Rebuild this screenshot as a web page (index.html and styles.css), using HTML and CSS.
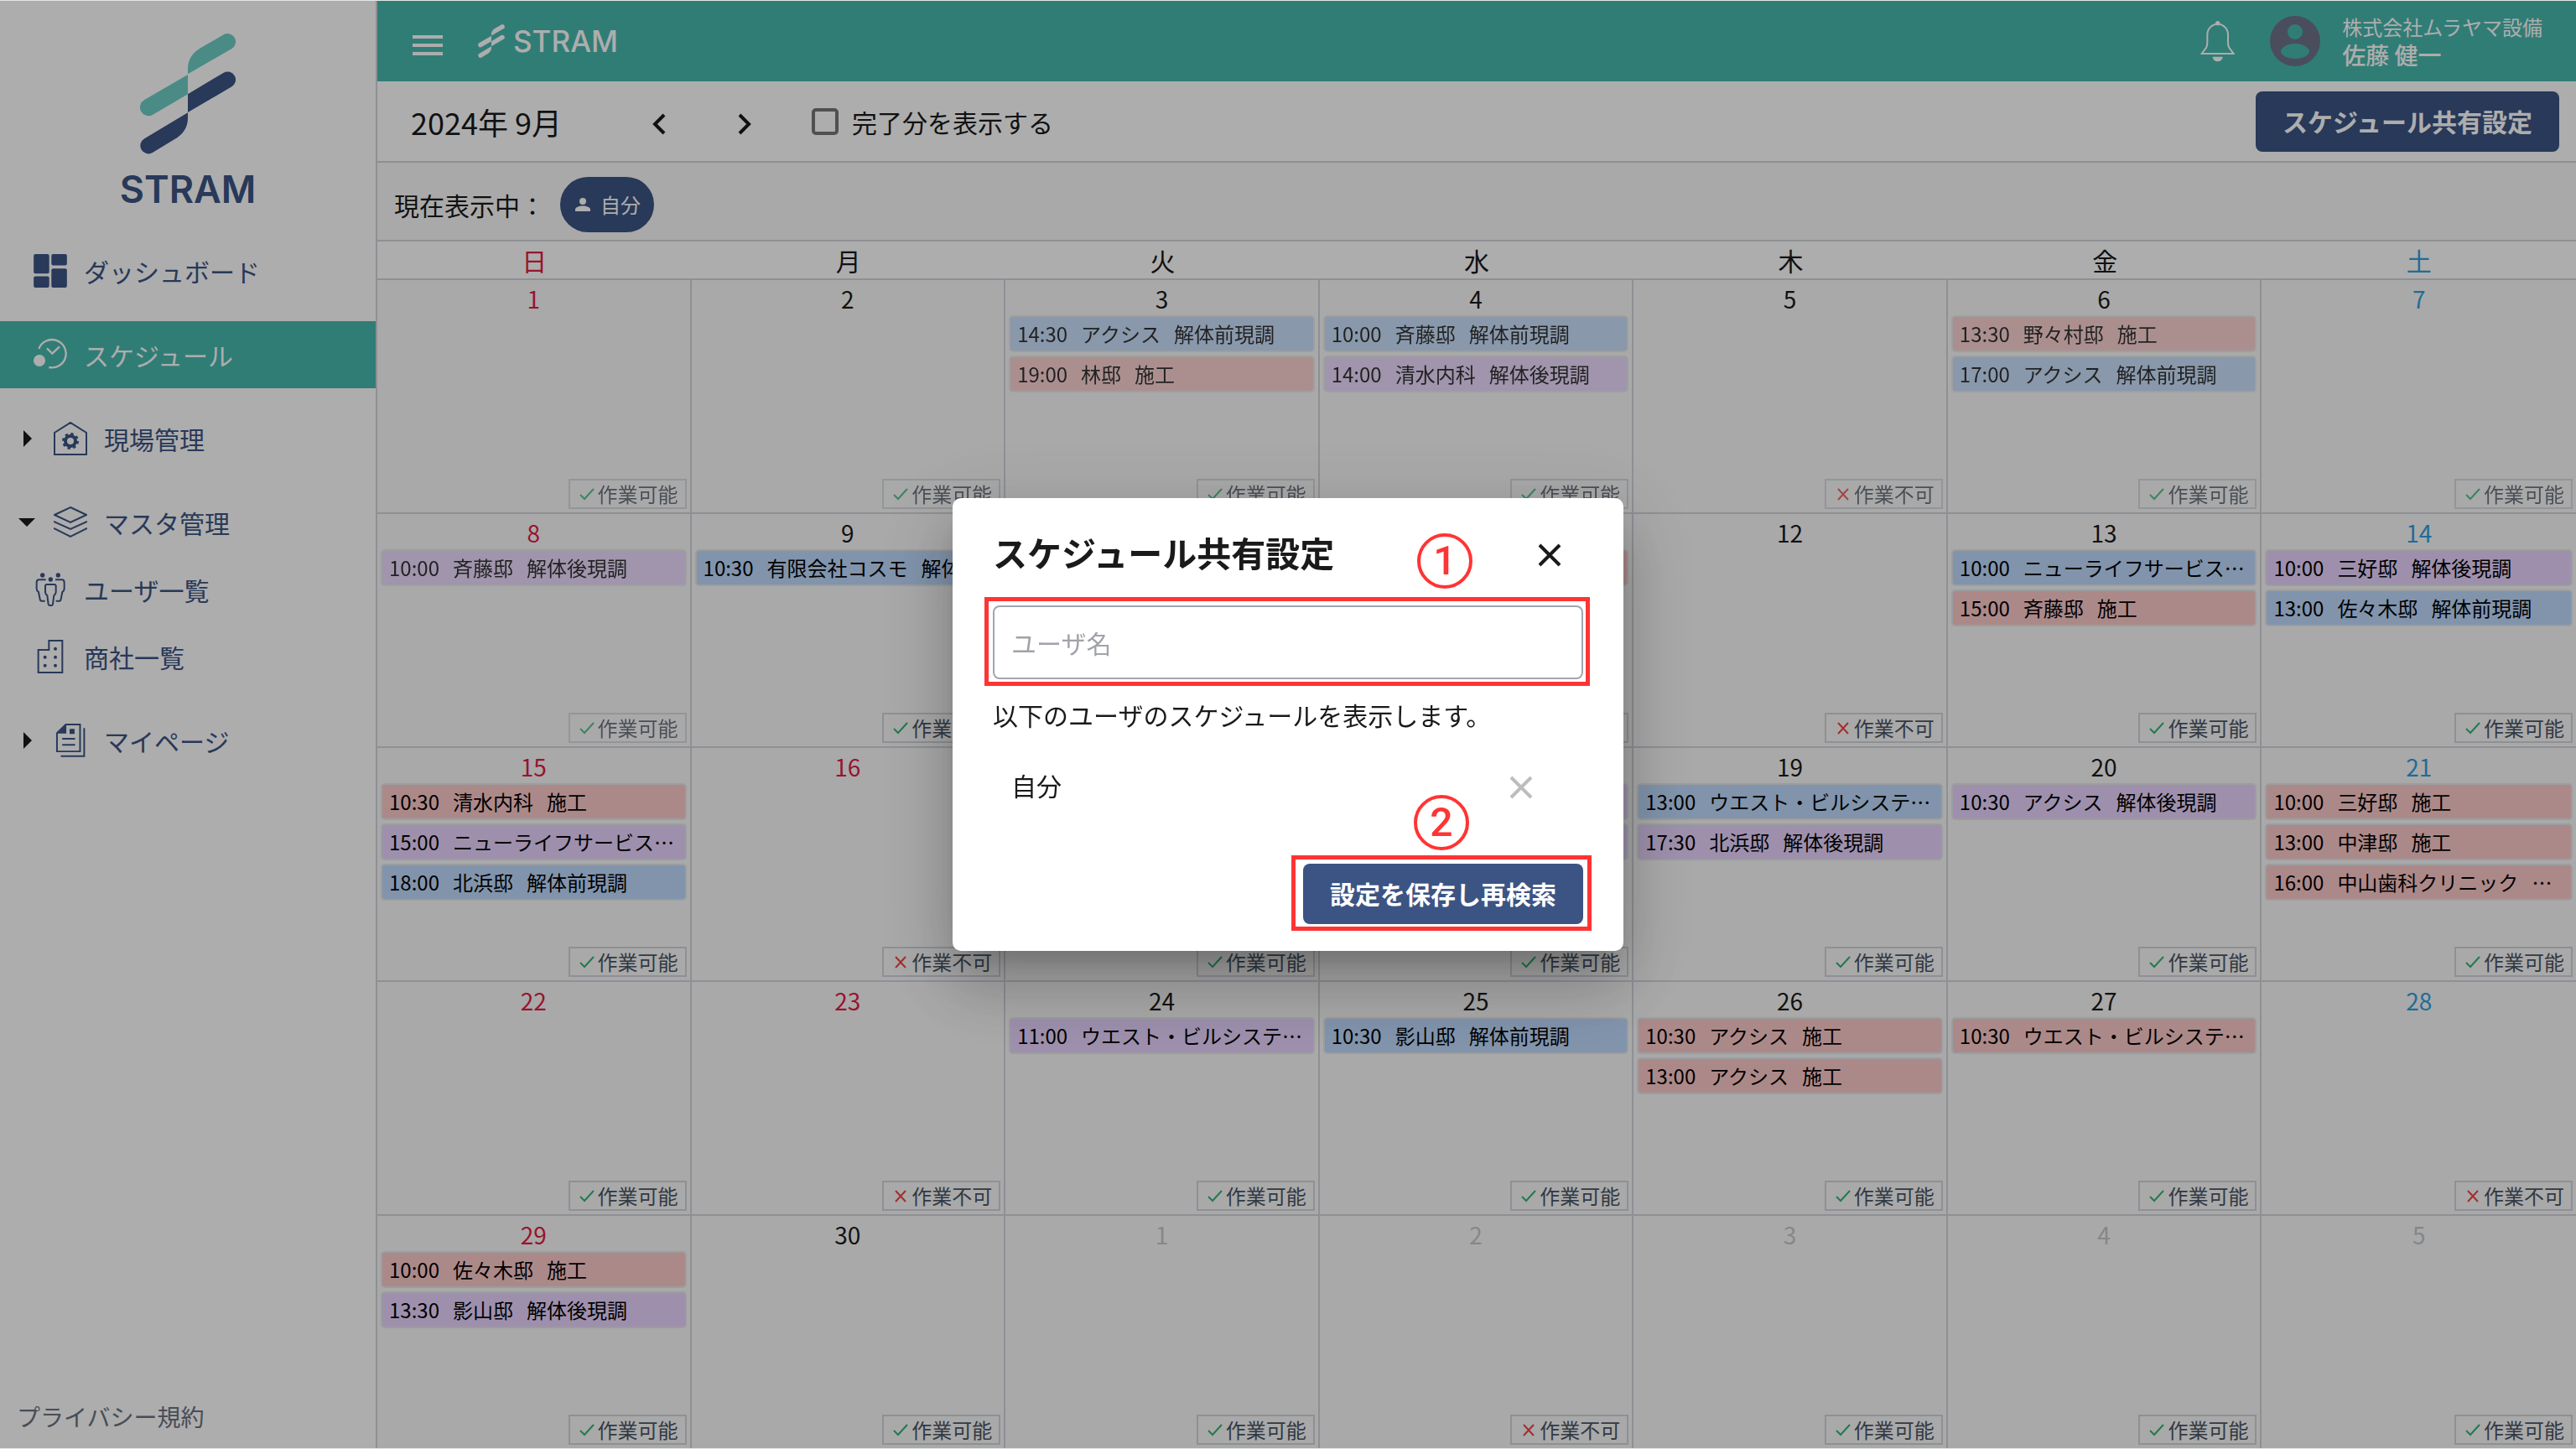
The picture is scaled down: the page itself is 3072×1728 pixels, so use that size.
FILE: index.html
```html
<!DOCTYPE html>
<html lang="ja">
<head>
<meta charset="utf-8">
<meta name="viewport" content="width=device-width, initial-scale=1">
<title>STRAM スケジュール</title>
<link rel="stylesheet" href="styles.css">
</head>
<body>
<svg class="defs" aria-hidden="true">
  <symbol id="mark" viewBox="500 120 344 436">
    <path class="mark-a" d="M672 270 516 361A29 29 0 0 0 545 415L672 340Z"/>
    <path class="mark-a" d="M672 268V250C672 215 690 190 720 173L801 126A29 29 0 0 1 829 177Z"/>
    <path class="mark-b" d="M672 340 801 263A29 29 0 0 1 829 314L672 406Z"/>
    <path class="mark-b" d="M672 407V426C672 460 655 485 622 504L545 551A29 29 0 0 1 516 500Z"/>
  </symbol>
  <symbol id="ok" viewBox="0 0 18 18"><path d="M1 10 6 15 17 3" fill="none" stroke="currentColor" stroke-width="2"/></symbol>
  <symbol id="ng" viewBox="0 0 18 18"><path d="M3 3 15 16M15 3 3 16" fill="none" stroke="currentColor" stroke-width="2"/></symbol>
  <symbol id="close" viewBox="0 0 28 28"><path d="M2 2 26 26M26 2 2 26" fill="none" stroke="currentColor" stroke-width="4"/></symbol>
  <symbol id="tri-right" viewBox="0 0 20 20"><path d="M6 0 16 10 6 20Z" fill="currentColor"/></symbol>
  <symbol id="tri-down" viewBox="0 0 20 20"><path d="M0 5H20L10 15Z" fill="currentColor"/></symbol>
</svg>

<div class="app">
  <aside class="sidebar">
    <a class="brand" href="#">
      <svg class="brand-mark"><use href="#mark"/></svg>
      <span class="brand-name">STRAM</span>
    </a>
    <nav class="nav">
      <a class="nav-item" href="#">
        <svg class="icon" viewBox="120 910 120 121" fill="currentColor"><rect x="120" y="910" width="56" height="70" rx="6"/><rect x="120" y="990" width="56" height="41" rx="6"/><rect x="184" y="910" width="56" height="41" rx="6"/><rect x="184" y="962" width="56" height="69" rx="6"/></svg>
        ダッシュボード
      </a>
      <a class="nav-item is-active" href="#" aria-current="page">
        <svg class="icon" viewBox="120 1216 120 120" fill="none" stroke="currentColor" stroke-width="7"><path d="M139 1255A50 50 0 1 1 175 1321M168 1253 187 1272 213 1247"/><circle cx="141" cy="1297" r="21" fill="currentColor" stroke="none"/></svg>
        スケジュール
      </a>
      <details>
        <summary class="nav-item nav-parent">
          <svg class="tri"><use href="#tri-right"/></svg>
          <svg class="icon" viewBox="0 0 40 40" fill="none" stroke="currentColor" stroke-width="2"><path d="M1 13 20 1 39 13V39H1Z"/><circle cx="20" cy="23" r="6" stroke-width="4"/><circle cx="20" cy="23" r="8.5" stroke-width="3" stroke-dasharray="3.34"/></svg>
          現場管理
        </summary>
      </details>
      <details open>
        <summary class="nav-item nav-parent">
          <svg class="tri"><use href="#tri-down"/></svg>
          <svg class="icon" viewBox="0 0 40 40" fill="none" stroke="currentColor" stroke-width="2"><path d="M20 2 39 11 20 20 1 11ZM0 19 20 28 40 19M0 27 20 37 40 27"/></svg>
          マスタ管理
        </summary>
        <a class="nav-item" href="#">
          <svg class="icon" viewBox="120 611 120 120" fill="none" stroke="currentColor" stroke-width="6"><g fill="currentColor" stroke="none"><circle cx="152" cy="620" r="8"/><circle cx="208" cy="620" r="8"/><circle cx="181" cy="635" r="8"/></g><path d="M164 636H140q-9 0-9 10v22q0 8 7 12l5 26q1 6 6 6h12M198 636H221q9 0 9 10v22q0 8-7 12l-5 26q-1 6-6 6h-12M168 653h26q6 0 6 7v20q0 8-7 12l-4 31q-1 5-4 5h-8q-3 0-4-5l-4-31q-7-4-7-12v-20q0-7 6-7Z"/></svg>
          ユーザ一覧
        </a>
        <a class="nav-item" href="#">
          <svg class="icon" viewBox="120 851 120 120" fill="none" stroke="currentColor" stroke-width="6"><path d="M137 968V887H175V854H223V968Z"/><g fill="currentColor" stroke="none"><circle cx="198" cy="883" r="6"/><circle cx="198" cy="913" r="6"/><circle cx="161" cy="913" r="6"/><circle cx="198" cy="943" r="6"/><circle cx="161" cy="943" r="6"/></g></svg>
          商社一覧
        </a>
      </details>
      <details>
        <summary class="nav-item nav-parent">
          <svg class="tri"><use href="#tri-right"/></svg>
          <svg class="icon" viewBox="192 1151 120 122" fill="none" stroke="currentColor" stroke-width="6"><path d="M203 1185 235 1154H287V1252H203ZM222 1206H269M222 1228H269M217 1269H302V1167"/><path d="M203 1187 237 1154V1187ZM249 1170h18v18h-18Z" fill="currentColor" stroke="none"/></svg>
          マイページ
        </summary>
      </details>
    </nav>
    <a class="privacy" href="#">プライバシー規約</a>
  </aside>

  <main class="main">
    <header class="topbar">
      <button class="plain menu" type="button" aria-label="メニュー"><svg class="menu-icon" viewBox="0 0 36 24"><path d="M0 2H36M0 12H36M0 22H36" stroke="currentColor" stroke-width="4"/></svg></button>
      <a class="topbar-brand" href="#"><svg class="topbar-mark"><use href="#mark"/></svg>STRAM</a>
      <button class="plain bell" type="button" aria-label="通知"><svg class="bell-icon" viewBox="193 70 123 150"><path d="M198 190 213 170Q218 163 218 150V122A37 38 0 0 1 292 122V150Q292 163 297 170L312 190Z" fill="none" stroke="currentColor" stroke-width="6"/><circle cx="255" cy="81" r="8" fill="currentColor"/><path d="M237 201H273A18 17 0 0 1 237 201Z" fill="currentColor"/></svg></button>
      <svg class="avatar" viewBox="0 0 60 60" aria-hidden="true"><path fill="currentColor" fill-rule="evenodd" d="M30 0A30 30 0 1 0 30 60A30 30 0 1 0 30 0ZM30 10A9 9 0 1 1 30 28A9 9 0 1 1 30 10ZM30 33C39 33 47 38 47 42C47 47 39 51 30 51C21 51 13 47 13 42C13 38 21 33 30 33Z"/></svg>
      <div class="account"><span class="company">株式会社ムラヤマ設備</span><span class="person">佐藤 健一</span></div>
    </header>

    <div class="toolbar">
      <h1 class="month">2024年 9月</h1>
      <div class="pager">
        <button class="plain" type="button" aria-label="前の月"><svg class="chev" viewBox="0 0 16 26"><path d="M14 2 3 13 14 24" fill="none" stroke="currentColor" stroke-width="4"/></svg></button>
        <button class="plain" type="button" aria-label="次の月"><svg class="chev" viewBox="0 0 16 26"><path d="M2 2 13 13 2 24" fill="none" stroke="currentColor" stroke-width="4"/></svg></button>
      </div>
      <label class="check"><input class="check-box" type="checkbox">完了分を表示する</label>
      <button class="button toolbar-button" type="button">スケジュール共有設定</button>
    </div>

    <div class="filter">
      <span>現在表示中：</span>
      <span class="chip"><svg class="chip-icon" viewBox="0 0 18 18" fill="currentColor"><circle cx="9" cy="5" r="4"/><path d="M0 17V15C0 9 18 9 18 15V17Z"/></svg>自分</span>
    </div>

    <table class="calendar">
      <thead>
        <tr><th class="sun">日</th><th>月</th><th>火</th><th>水</th><th>木</th><th>金</th><th class="sat">土</th></tr>
      </thead>
      <tbody>
        <tr>
          <td class="past"><span class="day sun">1</span><span class="tag"><svg class="ok"><use href="#ok"/></svg>作業可能</span></td>
          <td class="past"><span class="day">2</span><span class="tag"><svg class="ok"><use href="#ok"/></svg>作業可能</span></td>
          <td class="past"><span class="day">3</span>
            <a class="event blue" href="#"><time>14:30</time><span>アクシス</span><span>解体前現調</span></a>
            <a class="event red" href="#"><time>19:00</time><span>林邸</span><span>施工</span></a>
            <span class="tag"><svg class="ok"><use href="#ok"/></svg>作業可能</span></td>
          <td class="past"><span class="day">4</span>
            <a class="event blue" href="#"><time>10:00</time><span>斉藤邸</span><span>解体前現調</span></a>
            <a class="event purple" href="#"><time>14:00</time><span>清水内科</span><span>解体後現調</span></a>
            <span class="tag"><svg class="ok"><use href="#ok"/></svg>作業可能</span></td>
          <td class="past"><span class="day">5</span><span class="tag"><svg class="ng"><use href="#ng"/></svg>作業不可</span></td>
          <td class="past"><span class="day">6</span>
            <a class="event red" href="#"><time>13:30</time><span>野々村邸</span><span>施工</span></a>
            <a class="event blue" href="#"><time>17:00</time><span>アクシス</span><span>解体前現調</span></a>
            <span class="tag"><svg class="ok"><use href="#ok"/></svg>作業可能</span></td>
          <td class="past"><span class="day sat">7</span><span class="tag"><svg class="ok"><use href="#ok"/></svg>作業可能</span></td>
        </tr>
        <tr>
          <td class="past"><span class="day sun">8</span>
            <a class="event purple" href="#"><time>10:00</time><span>斉藤邸</span><span>解体後現調</span></a>
            <span class="tag"><svg class="ok"><use href="#ok"/></svg>作業可能</span></td>
          <td><span class="day">9</span>
            <a class="event blue" href="#"><time>10:30</time><span>有限会社コスモ</span><span>解体…</span></a>
            <span class="tag"><svg class="ok"><use href="#ok"/></svg>作業可能</span></td>
          <td></td>
          <td><span class="day"></span>
            <a class="event red" href="#"><time>10:00</time></a>
            <span class="tag"><svg class="ok"><use href="#ok"/></svg>作業可能</span></td>
          <td><span class="day">12</span><span class="tag"><svg class="ng"><use href="#ng"/></svg>作業不可</span></td>
          <td><span class="day">13</span>
            <a class="event blue" href="#"><time>10:00</time><span>ニューライフサービス…</span></a>
            <a class="event red" href="#"><time>15:00</time><span>斉藤邸</span><span>施工</span></a>
            <span class="tag"><svg class="ok"><use href="#ok"/></svg>作業可能</span></td>
          <td><span class="day sat">14</span>
            <a class="event purple" href="#"><time>10:00</time><span>三好邸</span><span>解体後現調</span></a>
            <a class="event blue" href="#"><time>13:00</time><span>佐々木邸</span><span>解体前現調</span></a>
            <span class="tag"><svg class="ok"><use href="#ok"/></svg>作業可能</span></td>
        </tr>
        <tr>
          <td><span class="day sun">15</span>
            <a class="event red" href="#"><time>10:30</time><span>清水内科</span><span>施工</span></a>
            <a class="event purple" href="#"><time>15:00</time><span>ニューライフサービス…</span></a>
            <a class="event blue" href="#"><time>18:00</time><span>北浜邸</span><span>解体前現調</span></a>
            <span class="tag"><svg class="ok"><use href="#ok"/></svg>作業可能</span></td>
          <td><span class="day sun">16</span><span class="tag"><svg class="ng"><use href="#ng"/></svg>作業不可</span></td>
          <td><span class="day"></span><span class="tag"><svg class="ok"><use href="#ok"/></svg>作業可能</span></td>
          <td><span class="day"></span>
            <a class="event purple" href="#"><time>10:00</time></a>
            <a class="event purple" href="#"><time>13:00</time></a>
            <span class="tag"><svg class="ok"><use href="#ok"/></svg>作業可能</span></td>
          <td><span class="day">19</span>
            <a class="event blue" href="#"><time>13:00</time><span>ウエスト・ビルシステ…</span></a>
            <a class="event purple" href="#"><time>17:30</time><span>北浜邸</span><span>解体後現調</span></a>
            <span class="tag"><svg class="ok"><use href="#ok"/></svg>作業可能</span></td>
          <td><span class="day">20</span>
            <a class="event purple" href="#"><time>10:30</time><span>アクシス</span><span>解体後現調</span></a>
            <span class="tag"><svg class="ok"><use href="#ok"/></svg>作業可能</span></td>
          <td><span class="day sat">21</span>
            <a class="event red" href="#"><time>10:00</time><span>三好邸</span><span>施工</span></a>
            <a class="event red" href="#"><time>13:00</time><span>中津邸</span><span>施工</span></a>
            <a class="event red" href="#"><time>16:00</time><span>中山歯科クリニック</span><span>…</span></a>
            <span class="tag"><svg class="ok"><use href="#ok"/></svg>作業可能</span></td>
        </tr>
        <tr>
          <td><span class="day sun">22</span><span class="tag"><svg class="ok"><use href="#ok"/></svg>作業可能</span></td>
          <td><span class="day sun">23</span><span class="tag"><svg class="ng"><use href="#ng"/></svg>作業不可</span></td>
          <td><span class="day">24</span>
            <a class="event purple" href="#"><time>11:00</time><span>ウエスト・ビルシステ…</span></a>
            <span class="tag"><svg class="ok"><use href="#ok"/></svg>作業可能</span></td>
          <td><span class="day">25</span>
            <a class="event blue" href="#"><time>10:30</time><span>影山邸</span><span>解体前現調</span></a>
            <span class="tag"><svg class="ok"><use href="#ok"/></svg>作業可能</span></td>
          <td><span class="day">26</span>
            <a class="event red" href="#"><time>10:30</time><span>アクシス</span><span>施工</span></a>
            <a class="event red" href="#"><time>13:00</time><span>アクシス</span><span>施工</span></a>
            <span class="tag"><svg class="ok"><use href="#ok"/></svg>作業可能</span></td>
          <td><span class="day">27</span>
            <a class="event red" href="#"><time>10:30</time><span>ウエスト・ビルシステ…</span></a>
            <span class="tag"><svg class="ok"><use href="#ok"/></svg>作業可能</span></td>
          <td><span class="day sat">28</span><span class="tag"><svg class="ng"><use href="#ng"/></svg>作業不可</span></td>
        </tr>
        <tr>
          <td><span class="day sun">29</span>
            <a class="event red" href="#"><time>10:00</time><span>佐々木邸</span><span>施工</span></a>
            <a class="event purple" href="#"><time>13:30</time><span>影山邸</span><span>解体後現調</span></a>
            <span class="tag"><svg class="ok"><use href="#ok"/></svg>作業可能</span></td>
          <td><span class="day">30</span><span class="tag"><svg class="ok"><use href="#ok"/></svg>作業可能</span></td>
          <td><span class="day other">1</span><span class="tag"><svg class="ok"><use href="#ok"/></svg>作業可能</span></td>
          <td><span class="day other">2</span><span class="tag"><svg class="ng"><use href="#ng"/></svg>作業不可</span></td>
          <td><span class="day other">3</span><span class="tag"><svg class="ok"><use href="#ok"/></svg>作業可能</span></td>
          <td><span class="day other">4</span><span class="tag"><svg class="ok"><use href="#ok"/></svg>作業可能</span></td>
          <td><span class="day other">5</span><span class="tag"><svg class="ok"><use href="#ok"/></svg>作業可能</span></td>
        </tr>
      </tbody>
    </table>
  </main>
</div>

<div class="backdrop">
  <section class="dialog" role="dialog" aria-modal="true" aria-labelledby="dialog-title">
    <header class="dialog-head">
      <h2 class="dialog-title" id="dialog-title">スケジュール共有設定</h2>
      <button class="plain dialog-close" type="button" aria-label="閉じる"><svg class="close-icon"><use href="#close"/></svg></button>
      <span class="step step-one">1</span>
    </header>
    <div class="field marked">
      <input class="text-input" type="text" placeholder="ユーザ名" aria-label="ユーザ名">
    </div>
    <p class="note">以下のユーザのスケジュールを表示します。</p>
    <div class="member">
      <span>自分</span>
      <button class="plain member-remove" type="button" aria-label="自分を外す" disabled><svg class="close-icon"><use href="#close"/></svg></button>
    </div>
    <footer class="dialog-foot">
      <div class="save marked">
        <button class="button" type="button">設定を保存し再検索</button>
        <span class="step step-two">2</span>
      </div>
    </footer>
  </section>
</div>
</body>
</html>
```
FILE: styles.css
```css
:root {
  --teal: #48b8af;
  --navy: #3c5484;
  --line: #d1d5db;
  --mark: #ff3434;
}

* { box-sizing: border-box; }

body {
  margin: 0;
  border: solid #e4e7e7;
  border-width: 1px 0;
  background: #fff;
  color: #1a1a1a;
  font: 30px/40px "Noto Sans CJK JP", sans-serif;
}

a { color: inherit; text-decoration: none; }
svg { display: block; flex: none; }
.defs { position: absolute; width: 0; height: 0; }

.plain {
  display: flex;
  margin: 0;
  padding: 0;
  border: 0;
  background: none;
  color: inherit;
  font: inherit;
}

.button {
  height: 72px;
  padding: 0 32px 2px;
  border: 0;
  border-radius: 8px;
  background: var(--navy);
  color: #fff;
  font: 700 30px/40px "Noto Sans CJK JP", sans-serif;
}

.app {
  display: grid;
  grid-template-columns: 450px minmax(0, 1fr);
  min-height: calc(100vh - 2px);
}

/* sidebar */
.sidebar {
  display: flex;
  flex-direction: column;
  border-right: 2px solid var(--line);
  color: var(--navy);
}

.brand {
  display: flex;
  flex-direction: column;
  align-items: center;
  gap: 16px;
  padding: 38px 0 31px;
}
.brand-mark { width: 114px; height: 145px; }
.brand-name { font: 600 45px/52px Inter, sans-serif; }
.mark-a { fill: #6dcdc6; }
.mark-b { fill: var(--navy); }

.nav { display: flex; flex-direction: column; gap: 20px; }
.nav-item {
  display: flex;
  align-items: center;
  gap: 20px;
  height: 80px;
  padding: 0 40px;
}
.nav-parent { padding-left: 22px; }
.nav-parent .tri { margin-right: 2px; }
.tri { width: 20px; height: 20px; color: #1a1a1a; }
.icon { width: 40px; height: 40px; }
.is-active { background: var(--teal); color: #fff; }

.privacy {
  margin-top: auto;
  padding: 0 20px 18px;
  color: #6b7280;
  font-size: 28px;
}

/* header */
.main {
  display: flex;
  flex-direction: column;
  min-width: 0;
  overflow: hidden;
}

.topbar {
  display: flex;
  align-items: center;
  height: 96px;
  padding: 0 40px 0 42px;
  background: var(--teal);
  color: #fff;
}
.menu-icon { width: 36px; height: 24px; }
.menu { padding-top: 10px; }
.topbar-brand {
  display: flex;
  align-items: center;
  gap: 10px;
  margin-left: 42px;
  font: 500 35px/40px Inter, sans-serif;
}
.topbar-mark { width: 32px; height: 40px; }
.topbar-brand { --navy: #fff; }
.topbar-mark { fill: #fff; filter: brightness(0) invert(1); }
.bell { margin-left: auto; }
.bell-icon { width: 41px; height: 50px; }
.avatar { width: 60px; height: 60px; margin: 0 26px 0 42px; color: #6e7388; }
.account { display: flex; flex-direction: column; }
.company { font-size: 24px; line-height: 32px; }
.person { font-size: 28px; font-weight: 500; line-height: 34px; }

.toolbar {
  display: flex;
  align-items: center;
  height: 97px;
  padding: 0 20px 0 40px;
  border-bottom: 2px solid var(--line);
}
.month { margin: 0; font-size: 36px; font-weight: 400; line-height: 48px; }
.pager { display: flex; gap: 86px; margin: 0 72px 0 108px; padding-top: 6px; }
.chev { width: 16px; height: 26px; }
.check { display: flex; align-items: center; gap: 16px; }
.check-box {
  appearance: none;
  width: 32px;
  height: 32px;
  margin: 0;
  border: 4px solid #767676;
  border-radius: 5px;
}
.toolbar-button { margin-left: auto; }

.filter {
  display: flex;
  align-items: center;
  gap: 18px;
  height: 94px;
  padding: 8px 20px 0;
  border-bottom: 2px solid var(--line);
  background: #fafafa;
}
.chip {
  display: flex;
  align-items: center;
  gap: 12px;
  height: 66px;
  padding: 0 16px 0 18px;
  border-radius: 33px;
  background: var(--navy);
  color: #fff;
  font-size: 24px;
}
.chip-icon { width: 18px; height: 18px; }

/* calendar: the last row's rule runs under the window's edge */
.calendar {
  display: grid;
  flex: 1;
  grid-template-columns: repeat(7, minmax(0, 1fr));
  grid-template-rows: 46px repeat(5, minmax(230px, 1fr));
  margin-bottom: -2px;
}
.calendar thead, .calendar tbody, .calendar tr { display: contents; }
.calendar th {
  padding: 2px 0 0;
  border-bottom: 2px solid var(--line);
  font-weight: 400;
}
.calendar td {
  display: flex;
  flex-direction: column;
  gap: 4px;
  min-width: 0;
  padding: 4px;
  border-right: 2px solid var(--line);
  border-bottom: 2px solid var(--line);
  background: #fafafa;
}
.calendar td:last-child { border-right: 0; }
.day { height: 34px; font-size: 28px; line-height: 36px; text-align: center; }
.sun { color: #e11d48; }
.sat { color: #2e9fe0; }
.other { color: #c4c8cc; }

.event {
  display: flex;
  align-items: center;
  gap: 16px;
  height: 44px;
  padding: 0 8px;
  border: 2px solid #e5e7eb;
  border-radius: 5px;
  color: #000;
  font-size: 24px;
  white-space: nowrap;
  overflow: hidden;
}
.blue { background: #bfdbfe; }
.red { background: #fecaca; }
.purple { background: #e9d5ff; }

.tag {
  display: flex;
  align-items: center;
  align-self: flex-end;
  gap: 4px;
  height: 36px;
  margin-top: auto;
  padding: 0 8px 0 11px;
  border: 2px solid var(--line);
  color: #4b5563;
  font-size: 24px;
}
.tag svg { width: 18px; height: 18px; }
.ok { color: #2fb673; }
.ng { color: #f04444; }
.past .event, .past .tag { opacity: .8; }

/* dialog */
.backdrop {
  position: fixed;
  inset: 1px 0;
  display: flex;
  align-items: center;
  justify-content: center;
  background: rgba(0, 0, 0, .32);
}
.dialog {
  width: 800px;
  padding: 34px 48px 32px;
  border-radius: 10px;
  background: #fff;
  box-shadow: 0 22px 30px -14px rgba(0, 0, 0, .2), 0 48px 76px 6px rgba(0, 0, 0, .14), 0 18px 92px 16px rgba(0, 0, 0, .12);
}
.dialog-head {
  position: relative;
  display: flex;
  align-items: center;
  justify-content: space-between;
  height: 60px;
  margin-bottom: 34px;
  padding-right: 26px;
}
.dialog-title { margin: 0; font-size: 41px; font-weight: 700; line-height: 60px; }
.dialog-close { padding-top: 8px; }
.close-icon { width: 28px; height: 28px; }

.marked { position: relative; }
.marked::after {
  content: "";
  position: absolute;
  inset: -10px -8px -8px -10px;
  border: 5px solid var(--mark);
  pointer-events: none;
}
.save::after { left: -14px; right: -10px; }
.text-input {
  display: block;
  width: 100%;
  height: 88px;
  padding: 0 20px;
  border: 2px solid #a0a6b0;
  border-radius: 8px;
  background: #fff;
  color: inherit;
  font: inherit;
}
.text-input::placeholder { color: #a0a3a9; opacity: 1; }
.note { margin: 22px 0 24px; }
.member {
  display: flex;
  align-items: center;
  justify-content: space-between;
  height: 80px;
  padding: 0 60px 0 22px;
}
.member-remove { padding-top: 6px; color: #bdbdbd; }
.dialog-foot { display: flex; justify-content: flex-end; margin-top: 54px; }

.step {
  position: absolute;
  display: flex;
  align-items: center;
  justify-content: center;
  width: 66px;
  height: 66px;
  border: 4px solid var(--mark);
  border-radius: 50%;
  color: var(--mark);
  font: 500 48px/1 Roboto, sans-serif;
}
.step-one { top: 8px; right: 132px; }
.step-two { bottom: 88px; right: 136px; }
```
